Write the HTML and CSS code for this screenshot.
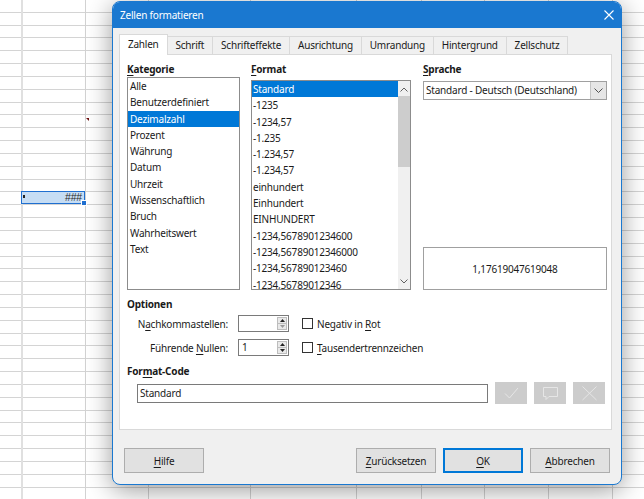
FILE: index.html
```html
<!DOCTYPE html>
<html lang="de">
<head>
<meta charset="utf-8">
<title>Zellen formatieren</title>
<link rel="stylesheet" href="styles.css">
</head>
<body>
<div class="sheet">
  <span class="comment-mark"></span>
  <div class="cell-cursor"><span class="cell-mark"></span><span class="cell-text">###</span><span class="fill-handle"></span></div>
</div>

<div class="dialog">
  <div class="titlebar">
    <span class="title">Zellen formatieren</span>
    <svg class="close" width="10" height="10" viewBox="0 0 10 10"><path d="M0.5 0.5L9.5 9.5M9.5 0.5L0.5 9.5" stroke="#fff" stroke-width="1.1" fill="none"/></svg>
  </div>
  <div class="dlg-body">
    <div class="tabs">
      <div class="tab active">Zahlen</div>
      <div class="tab">Schrift</div>
      <div class="tab">Schrifteffekte</div>
      <div class="tab">Ausrichtung</div>
      <div class="tab">Umrandung</div>
      <div class="tab">Hintergrund</div>
      <div class="tab">Zellschutz</div>
    </div>
    <div class="page">
      <div class="top">
        <div class="col col-cat">
          <div class="heading"><u>K</u>ategorie</div>
          <ul class="list cat-list">
            <li>Alle</li>
            <li>Benutzerdefiniert</li>
            <li class="sel">Dezimalzahl</li>
            <li>Prozent</li>
            <li>Währung</li>
            <li>Datum</li>
            <li>Uhrzeit</li>
            <li>Wissenschaftlich</li>
            <li>Bruch</li>
            <li>Wahrheitswert</li>
            <li>Text</li>
          </ul>
        </div>
        <div class="col col-fmt">
          <div class="heading"><u>F</u>ormat</div>
          <div class="list fmt-list">
            <ul class="fmt-items">
              <li class="sel">Standard</li>
              <li>-1235</li>
              <li>-1234,57</li>
              <li>-1.235</li>
              <li>-1.234,57</li>
              <li>-1.234,57</li>
              <li>einhundert</li>
              <li>Einhundert</li>
              <li>EINHUNDERT</li>
              <li>-1234,5678901234600</li>
              <li>-1234,56789012346000</li>
              <li>-1234,567890123460</li>
              <li>-1234,56789012346</li>
            </ul>
            <div class="scrollbar">
              <svg class="sarrow" width="8" height="5" viewBox="0 0 8 5"><path d="M0.5 4.5L4 1L7.5 4.5" stroke="#606060" fill="none"/></svg>
              <div class="track"><div class="thumb"></div></div>
              <svg class="sarrow" width="8" height="5" viewBox="0 0 8 5"><path d="M0.5 0.5L4 4L7.5 0.5" stroke="#606060" fill="none"/></svg>
            </div>
          </div>
        </div>
        <div class="col col-lang">
          <div class="heading"><u>S</u>prache</div>
          <div class="select">
            <span class="select-text">Standard - Deutsch (Deutschland)</span>
            <span class="select-btn"><svg width="9" height="5" viewBox="0 0 9 5"><path d="M0.5 0.5L4.5 4.5L8.5 0.5" stroke="#505050" fill="none"/></svg></span>
          </div>
          <div class="preview">1,17619047619048</div>
        </div>
      </div>

      <div class="heading opt-heading">Optionen</div>
      <div class="options">
        <span class="opt-label">N<u>a</u>chkommastellen:</span>
        <div class="spin">
          <span class="spin-val"></span>
          <span class="spin-btns">
            <span class="sb"><svg width="5" height="3" viewBox="0 0 5 3"><path d="M0 3L2.5 0L5 3Z" fill="#222"/></svg></span>
            <span class="sb"><svg width="5" height="3" viewBox="0 0 5 3"><path d="M0 0L2.5 3L5 0Z" fill="#9a9a9a"/></svg></span>
          </span>
        </div>
        <span class="check"><span class="box"></span><span class="check-label">Negativ in <u>R</u>ot</span></span>

        <span class="opt-label">Führende <u>N</u>ullen:</span>
        <div class="spin">
          <span class="spin-val">1</span>
          <span class="spin-btns">
            <span class="sb"><svg width="5" height="3" viewBox="0 0 5 3"><path d="M0 3L2.5 0L5 3Z" fill="#222"/></svg></span>
            <span class="sb"><svg width="5" height="3" viewBox="0 0 5 3"><path d="M0 0L2.5 3L5 0Z" fill="#222"/></svg></span>
          </span>
        </div>
        <span class="check"><span class="box"></span><span class="check-label"><u>T</u>ausendertrennzeichen</span></span>
      </div>

      <div class="heading code-heading">For<u>m</u>at-Code</div>
      <div class="code-row">
        <div class="code-input">Standard</div>
        <span class="icon-btn"><svg width="32" height="22" viewBox="0 0 32 22"><path d="M10 11.5L14.5 16L23 6" stroke="#e6e6e6" stroke-width="1" fill="none"/></svg></span>
        <span class="icon-btn"><svg width="32" height="22" viewBox="0 0 32 22"><path d="M9.5 5.5H23.5V14.5H15L12 17.5V14.5H9.5Z" stroke="#e6e6e6" stroke-width="1" fill="none"/></svg></span>
        <span class="icon-btn"><svg width="32" height="22" viewBox="0 0 32 22"><path d="M9.5 4.5L23.5 18M23.5 4.5L9.5 18" stroke="#e6e6e6" stroke-width="1" fill="none"/></svg></span>
      </div>
    </div>

    <div class="buttons">
      <button class="btn"><u>H</u>ilfe</button>
      <span class="spacer"></span>
      <button class="btn"><u>Z</u>urücksetzen</button>
      <button class="btn default"><u>O</u>K</button>
      <button class="btn"><u>A</u>bbrechen</button>
    </div>
  </div>
</div>
</body>
</html>
```

FILE: styles.css
```css
html, body {
  margin: 0;
  padding: 0;
}

body {
  width: 644px;
  height: 499px;
  overflow: hidden;
  position: relative;
  font-family: "Noto Sans", "DejaVu Sans", sans-serif;
  font-size: 10px;
  letter-spacing: -0.2px;
  color: #1a1a1a;
  background:
    linear-gradient(#e0e0e0, #e0e0e0) 21px 0 / 2px 100% no-repeat,
    linear-gradient(#d2d2d2, #d2d2d2) 85px 0 / 1px 100% no-repeat,
    linear-gradient(#d2d2d2, #d2d2d2) 148px 0 / 1px 100% no-repeat,
    linear-gradient(#d2d2d2, #d2d2d2) 250px 0 / 1px 100% no-repeat,
    linear-gradient(#d2d2d2, #d2d2d2) 356px 0 / 1px 100% no-repeat,
    linear-gradient(#d2d2d2, #d2d2d2) 421px 0 / 1px 100% no-repeat,
    linear-gradient(#d2d2d2, #d2d2d2) 484px 0 / 1px 100% no-repeat,
    linear-gradient(#d2d2d2, #d2d2d2) 548px 0 / 1px 100% no-repeat,
    linear-gradient(#d2d2d2, #d2d2d2) 612px 0 / 1px 100% no-repeat,
    repeating-linear-gradient(to bottom, #ffffff 0, #ffffff 11.83px, #d4d4d4 11.83px, #d4d4d4 12.83px) 0 0 / 100% 100% no-repeat;
}

/* ---------- spreadsheet ---------- */
.sheet {
  width: 644px;
  height: 499px;
}

.comment-mark {
  position: absolute;
  left: 86px;
  top: 118px;
  width: 0;
  height: 0;
  border-top: 3px solid #6e1010;
  border-left: 3px solid transparent;
}

.cell-cursor {
  position: absolute;
  left: 21px;
  top: 191px;
  width: 64px;
  height: 13px;
  box-sizing: border-box;
  border: 1px solid #1f6fd0;
  background: #c6ddf4;
  display: flex;
  align-items: center;
  justify-content: flex-end;
  padding-right: 2px;
}

.cell-text {
  font-family: "Liberation Sans", Arial, sans-serif;
  font-size: 10.5px;
  line-height: 11px;
  color: #2a2a2a;
  letter-spacing: -0.2px;
}

.cell-mark {
  position: absolute;
  left: 1px;
  top: 3px;
  width: 2px;
  height: 3px;
  background: #222;
}

.fill-handle {
  position: absolute;
  right: -3px;
  bottom: -3px;
  width: 4px;
  height: 4px;
  background: #1f6fd0;
  border: 1px solid #fff;
}

/* ---------- dialog ---------- */
.dialog {
  position: absolute;
  left: 112px;
  top: 1px;
  width: 510px;
  height: 484px;
  box-sizing: border-box;
  border: 1px solid #1a78d0;
  border-radius: 8px;
  background: #f0f0f0;
  box-shadow: 0 5px 26px rgba(0, 0, 0, 0.4);
  display: flex;
  flex-direction: column;
  overflow: hidden;
}

.titlebar {
  height: 26px;
  flex: none;
  background: #1a78d0;
  color: #fff;
  display: flex;
  align-items: center;
  justify-content: space-between;
  padding: 0 7px 0 7px;
  font-size: 10px;
}

.close {
  display: block;
}

.dlg-body {
  flex: 1;
  display: flex;
  flex-direction: column;
  padding: 6px 9px 0 6px;
}

/* tabs */
.tabs {
  display: flex;
  align-items: flex-end;
  height: 20px;
  flex: none;
}

.tab {
  box-sizing: border-box;
  height: 18px;
  padding: 0 7.9px;
  border: 1px solid #d9d9d9;
  border-bottom: none;
  margin-left: -1px;
  background: #f0f0f0;
  line-height: 17px;
  white-space: nowrap;
}

.tab:first-child {
  margin-left: 0;
}

.tab.active {
  height: 21px;
  margin-bottom: -1px;
  background: #fff;
  position: relative;
  z-index: 1;
  line-height: 19px;
}

/* tab page */
.page {
  height: 376px;
  flex: none;
  box-sizing: border-box;
  background: #fff;
  border: 1px solid #d9d9d9;
  padding: 6px 4px 0 7px;
  display: flex;
  flex-direction: column;
}

.heading {
  height: 16px;
  line-height: 16px;
  font-weight: bold;
  white-space: nowrap;
}

.top {
  display: flex;
  height: 229px;
  flex: none;
}

.col {
  display: flex;
  flex-direction: column;
}

.col-cat {
  width: 113px;
}

.col-fmt {
  width: 160px;
  margin-left: 11px;
}

.col-lang {
  width: 184px;
  margin-left: 12px;
}

.list {
  margin: 0;
  padding: 0;
  list-style: none;
  box-sizing: border-box;
  border: 1px solid #8c8c8c;
  background: #fff;
  flex: 1;
  overflow: hidden;
}

.list li,
.fmt-items li {
  height: 16.3px;
  line-height: 16.3px;
  white-space: nowrap;
}

.cat-list li {
  padding-left: 2px;
}

.list li.sel,
.fmt-items li.sel {
  background: #0078d7;
  color: #fff;
}

.fmt-list {
  margin-top: 3px;
  display: flex;
}

.fmt-items {
  flex: 1;
  margin: 0;
  padding: 0;
  list-style: none;
  overflow: hidden;
}

.fmt-items li {
  padding-left: 1px;
}

.scrollbar {
  width: 12px;
  flex: none;
  background: #f0f0f0;
  display: flex;
  flex-direction: column;
  align-items: center;
  padding: 6px 0 5px;
  box-sizing: border-box;
}

.track {
  flex: 1;
  width: 100%;
  padding-top: 4px;
}

.thumb {
  height: 71px;
  background: #cdcdcd;
}

.sarrow {
  display: block;
}

.select {
  margin-top: 4px;
  height: 19px;
  box-sizing: border-box;
  border: 1px solid #a0a0a0;
  background: #fff;
  display: flex;
  align-items: stretch;
}

.select-text {
  flex: 1;
  padding-left: 2px;
  line-height: 17px;
  white-space: nowrap;
}

.select-btn {
  width: 15px;
  background: #e6e6e6;
  border-left: 1px solid #c4c4c4;
  display: flex;
  align-items: center;
  justify-content: center;
}

.select-btn svg {
  display: block;
}

.preview {
  margin-top: auto;
  height: 43px;
  box-sizing: border-box;
  border: 1px solid #a0a0a0;
  display: flex;
  align-items: center;
  justify-content: center;
}

/* options */
.opt-heading {
  margin-top: 6px;
}

.options {
  margin-top: 3px;
  display: grid;
  grid-template-columns: 101px 51px auto;
  grid-auto-rows: 17px;
  column-gap: 10px;
  row-gap: 7px;
  align-items: center;
}

.opt-label {
  text-align: right;
  white-space: nowrap;
}

.spin {
  height: 17px;
  box-sizing: border-box;
  border: 1px solid #7a7a7a;
  background: #fff;
  display: flex;
}

.spin-val {
  flex: 1;
  padding-left: 3px;
  line-height: 15px;
}

.spin-btns {
  width: 10px;
  display: flex;
  flex-direction: column;
  padding: 1px 1px 1px 0;
}

.sb {
  flex: 1;
  background: #e9e9e9;
  border: 1px solid #bdbdbd;
  display: flex;
  align-items: center;
  justify-content: center;
}

.sb + .sb {
  border-top: none;
}

.sb svg {
  display: block;
}

.check {
  margin-left: 3px;
  display: flex;
  align-items: center;
  white-space: nowrap;
}

.box {
  width: 11px;
  height: 11px;
  box-sizing: border-box;
  border: 1px solid #333;
  background: #fff;
  margin-right: 4px;
}

.code-heading {
  margin-top: 7px;
}

.code-row {
  margin-top: 3px;
  height: 22px;
  display: flex;
  align-items: center;
  padding-left: 10px;
  gap: 7px;
}

.code-input {
  width: 351px;
  height: 19px;
  box-sizing: border-box;
  border: 1px solid #7a7a7a;
  background: #fff;
  padding-left: 2px;
  line-height: 17px;
}

.icon-btn {
  width: 32px;
  height: 22px;
  background: #cccccc;
  display: block;
}

.icon-btn svg {
  display: block;
}

/* bottom buttons */
.buttons {
  margin-top: 18px;
  display: flex;
  gap: 7px;
  padding: 0 2px 0 5px;
}

.spacer {
  flex: 1;
}

.btn {
  width: 80px;
  height: 25px;
  box-sizing: border-box;
  border: 1px solid #adadad;
  background: #e1e1e1;
  font-family: inherit;
  font-size: 10px;
  letter-spacing: inherit;
  color: #1a1a1a;
  padding: 0;
}

.btn.default {
  border: 1px solid #0078d7;
  box-shadow: inset 0 0 0 1px #0078d7;
}

u {
  text-decoration-thickness: 1px;
  text-underline-offset: 1.5px;
}
```
